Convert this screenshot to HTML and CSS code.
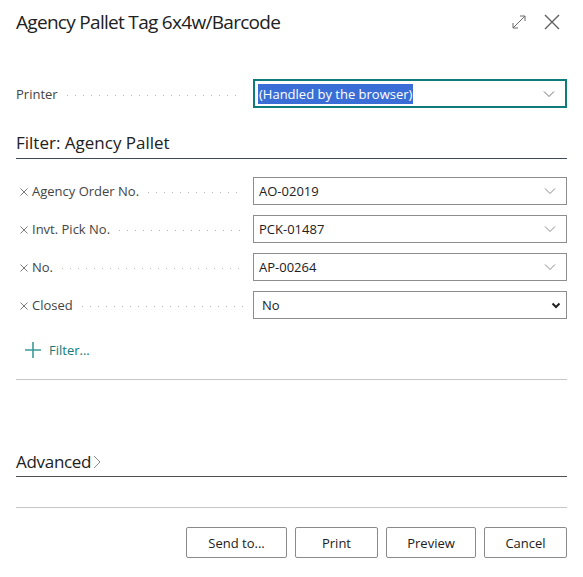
FILE: index.html
```html
<!DOCTYPE html>
<html lang="en">
<head>
<meta charset="utf-8">
<title>Agency Pallet Tag 6x4w/Barcode</title>
<link rel="stylesheet" href="styles.css">
</head>
<body>
<div class="dialog">
  <header class="dlg-header">
    <h1 class="dlg-title">Agency Pallet Tag 6x4w/Barcode</h1>
    <div class="dlg-actions">
      <svg class="icon-expand" width="16" height="16" viewBox="0 0 16 16" aria-hidden="true">
        <path d="M2 14 L14 2 M9 2 H14 V7 M2 9 V14 H7" fill="none" stroke="#6b6b6b" stroke-width="1"/>
      </svg>
      <svg class="icon-close" width="18" height="18" viewBox="0 0 18 18" aria-hidden="true">
        <path d="M2 2 L16 16 M16 2 L2 16" fill="none" stroke="#5f5f5f" stroke-width="1.4"/>
      </svg>
    </div>
  </header>

  <div class="field-row printer-row">
    <div class="field-label"><span class="label-text">Printer</span><span class="leader"></span></div>
    <div class="combo combo-focused">
      <span class="combo-value"><span class="selected-text">(Handled by the browser)</span></span>
      <svg class="chev" width="12" height="8" viewBox="0 0 12 8" aria-hidden="true"><path d="M1 1.5 L6 6.5 L11 1.5" fill="none" stroke="#707070" stroke-width="1"/></svg>
    </div>
  </div>

  <h2 class="section-title">Filter: Agency Pallet</h2>

  <div class="filter-list">
    <div class="field-row">
      <div class="field-label"><svg class="remove" width="8" height="8" viewBox="0 0 8 8" aria-hidden="true"><path d="M0.5 0.5 L7.5 7.5 M7.5 0.5 L0.5 7.5" fill="none" stroke="#7a7a7a" stroke-width="1"/></svg><span class="label-text">Agency Order No.</span><span class="leader"></span></div>
      <div class="combo">
        <span class="combo-value">AO-02019</span>
        <svg class="chev" width="12" height="8" viewBox="0 0 12 8" aria-hidden="true"><path d="M1 1.5 L6 6.5 L11 1.5" fill="none" stroke="#8a8a8a" stroke-width="1"/></svg>
      </div>
    </div>
    <div class="field-row">
      <div class="field-label"><svg class="remove" width="8" height="8" viewBox="0 0 8 8" aria-hidden="true"><path d="M0.5 0.5 L7.5 7.5 M7.5 0.5 L0.5 7.5" fill="none" stroke="#7a7a7a" stroke-width="1"/></svg><span class="label-text">Invt. Pick No.</span><span class="leader"></span></div>
      <div class="combo">
        <span class="combo-value">PCK-01487</span>
        <svg class="chev" width="12" height="8" viewBox="0 0 12 8" aria-hidden="true"><path d="M1 1.5 L6 6.5 L11 1.5" fill="none" stroke="#8a8a8a" stroke-width="1"/></svg>
      </div>
    </div>
    <div class="field-row">
      <div class="field-label"><svg class="remove" width="8" height="8" viewBox="0 0 8 8" aria-hidden="true"><path d="M0.5 0.5 L7.5 7.5 M7.5 0.5 L0.5 7.5" fill="none" stroke="#7a7a7a" stroke-width="1"/></svg><span class="label-text">No.</span><span class="leader"></span></div>
      <div class="combo">
        <span class="combo-value">AP-00264</span>
        <svg class="chev" width="12" height="8" viewBox="0 0 12 8" aria-hidden="true"><path d="M1 1.5 L6 6.5 L11 1.5" fill="none" stroke="#8a8a8a" stroke-width="1"/></svg>
      </div>
    </div>
    <div class="field-row">
      <div class="field-label"><svg class="remove" width="8" height="8" viewBox="0 0 8 8" aria-hidden="true"><path d="M0.5 0.5 L7.5 7.5 M7.5 0.5 L0.5 7.5" fill="none" stroke="#7a7a7a" stroke-width="1"/></svg><span class="label-text">Closed</span><span class="leader"></span></div>
      <div class="combo combo-native">
        <span class="combo-value native-value">No</span>
        <svg class="chev-bold" width="10" height="7" viewBox="0 0 10 7" aria-hidden="true"><path d="M1.5 1.5 L5 5 L8.5 1.5" fill="none" stroke="#222" stroke-width="2"/></svg>
      </div>
    </div>
  </div>

  <div class="add-filter">
    <svg class="plus" width="16" height="16" viewBox="0 0 16 16" aria-hidden="true"><path d="M8 0 V16 M0 8 H16" fill="none" stroke="#3c9c98" stroke-width="1.6"/></svg>
    <span class="add-filter-text">Filter...</span>
  </div>

  <div class="divider divider-first"></div>

  <div class="section-collapsed">
    <span class="section-collapsed-text">Advanced</span>
    <svg class="chev-right" width="8" height="14" viewBox="0 0 8 14" aria-hidden="true"><path d="M1 1 L7 7 L1 13" fill="none" stroke="#8a8a8a" stroke-width="1"/></svg>
  </div>

  <div class="divider divider-footer"></div>

  <footer class="dlg-footer">
    <button class="btn btn-wide">Send to...</button>
    <button class="btn">Print</button>
    <button class="btn btn-mid">Preview</button>
    <button class="btn">Cancel</button>
  </footer>
</div>
</body>
</html>
```

FILE: styles.css
```css
* { box-sizing: border-box; }

body {
  margin: 0;
  background: #ffffff;
  font-family: "Open Sans", "Noto Sans", "Liberation Sans", sans-serif;
  color: #212121;
}

.dialog {
  width: 583px;
  padding: 0 16px;
}

.dlg-header {
  height: 44px;
  display: flex;
  align-items: center;
  justify-content: space-between;
}

.dlg-title {
  margin: 0;
  font-size: 19px;
  font-weight: 400;
  line-height: 24px;
  letter-spacing: -0.7px;
  color: #212121;
}

.dlg-actions {
  display: flex;
  align-items: center;
  gap: 16px;
  margin-right: 6px;
}

.field-row {
  display: grid;
  grid-template-columns: 237px 314px;
  height: 28px;
  align-items: center;
}

.printer-row {
  margin-top: 35px;
  height: 29px;
}

.field-label {
  display: flex;
  align-items: center;
  font-size: 13px;
  color: #444;
  height: 100%;
  padding-right: 10px;
}

.label-text { white-space: nowrap; }

.remove {
  flex: none;
  margin: 1px 4px 0 4px;
}

.leader {
  flex: 1;
  height: 2px;
  margin: 4px 0 0 9px;
  background-image: linear-gradient(to right, #b3b3b3 1px, transparent 1px);
  background-size: 8px 1px;
  background-repeat: repeat-x;
}

.combo {
  height: 100%;
  border: 1px solid #8d8d8d;
  display: flex;
  align-items: center;
  justify-content: space-between;
  padding: 0 10px 0 5px;
  font-size: 13px;
  color: #212121;
  background: #fff;
}

.combo-focused {
  border: 2px solid #0f7b7b;
  padding-left: 3px;
}

.selected-text {
  background: #3a6ed6;
  color: #fff;
  padding: 1px 1px;
}

.native-value { padding-left: 3px; }

.chev-bold { margin-right: -5px; }

.section-title {
  margin: 23px 0 0;
  font-size: 17px;
  font-weight: 400;
  line-height: 24px;
  padding-bottom: 3px;
  border-bottom: 1px solid #3f4b58;
  color: #212121;
}

.filter-list {
  margin-top: 18px;
  display: flex;
  flex-direction: column;
  gap: 10px;
}

.add-filter {
  margin-top: 19px;
  height: 24px;
  display: flex;
  align-items: center;
  gap: 8px;
  padding-left: 9px;
  font-size: 13px;
  color: #0f7b7b;
}

.divider {
  height: 1px;
  background: #c6c6c6;
}

.divider-first { margin-top: 17px; }

.section-collapsed {
  margin-top: 70px;
  height: 27px;
  padding-bottom: 3px;
  border-bottom: 1px solid #505050;
  display: flex;
  align-items: center;
  gap: 2px;
  font-size: 17px;
  letter-spacing: -0.3px;
  color: #212121;
}

.divider-footer { margin-top: 30px; }

.dlg-footer {
  margin-top: 19px;
  display: flex;
  justify-content: flex-end;
  gap: 8px;
}

.btn {
  height: 31px;
  min-width: 83px;
  padding: 0 18px;
  border: 1px solid #8a8a8a;
  border-radius: 2px;
  background: #fff;
  font-family: inherit;
  font-size: 13px;
  color: #212121;
}

.btn-wide { width: 101px; }
.btn-mid { width: 90px; }
```
